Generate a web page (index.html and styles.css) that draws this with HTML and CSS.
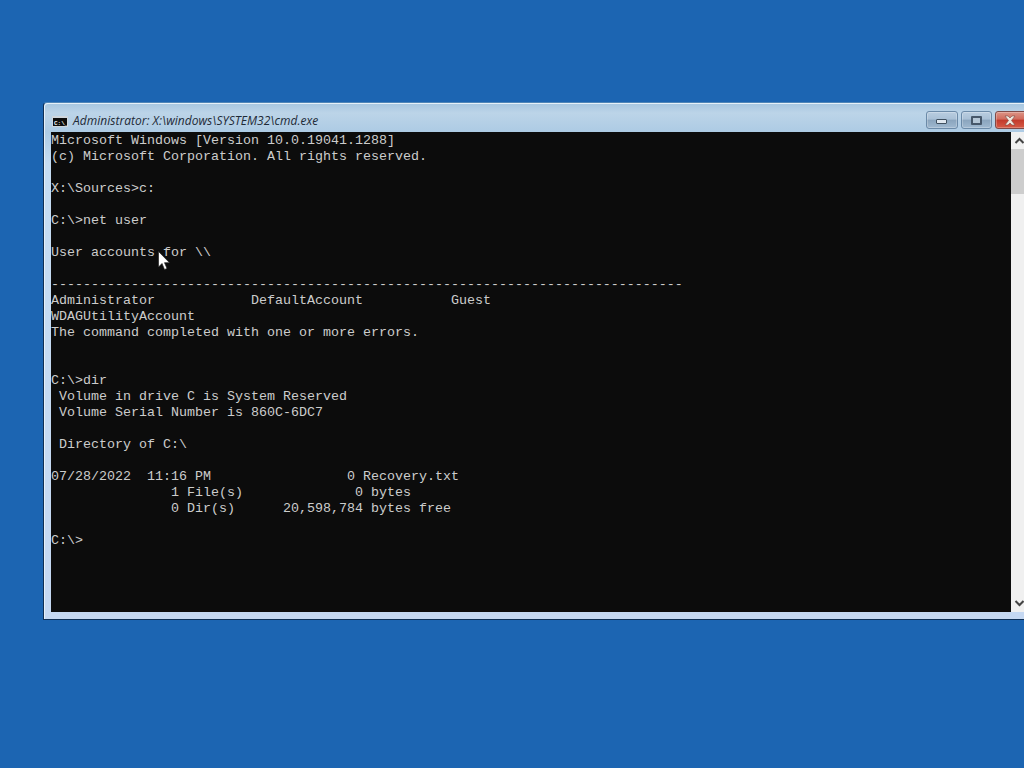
FILE: index.html
```html
<!DOCTYPE html>
<html lang="en">
<head>
<meta charset="utf-8">
<title>cmd.exe</title>
<link rel="stylesheet" href="styles.css">
</head>
<body>
<main class="desktop">
  <section class="window">
    <header class="titlebar">
      <svg class="app-icon" width="16" height="11" viewBox="0 0 16 11" aria-hidden="true">
        <rect width="16" height="11" fill="#cfd6dc"/>
        <rect x="1" y="2" width="14" height="8" fill="#0d0d0d"/>
        <text class="icon-text" x="2" y="8.500">C:\_</text>
      </svg>
      <span class="title">Administrator: X:\windows\SYSTEM32\cmd.exe</span>
      <div class="controls">
        <div class="btn btn-min"><span class="glyph-min"></span></div>
        <div class="btn btn-max"><span class="glyph-max"></span></div>
        <div class="btn btn-close">
          <svg width="12" height="11" viewBox="0 0 12 11" aria-hidden="true">
            <path d="M1 1h3l2 2 2-2h3L7.500 5.500 11 10H8L6 8 4 10H1l3.500-4.500z" fill="#f0e8e0" stroke="#7a4a44" stroke-width=".6"/>
          </svg>
        </div>
      </div>
    </header>
    <div class="client">
<pre class="console">Microsoft Windows [Version 10.0.19041.1288]
(c) Microsoft Corporation. All rights reserved.

X:\Sources&gt;c:

C:\&gt;net user

User accounts for \\

-------------------------------------------------------------------------------
Administrator            DefaultAccount           Guest
WDAGUtilityAccount
The command completed with one or more errors.


C:\&gt;dir
 Volume in drive C is System Reserved
 Volume Serial Number is 860C-6DC7

 Directory of C:\

07/28/2022  11:16 PM                 0 Recovery.txt
               1 File(s)              0 bytes
               0 Dir(s)      20,598,784 bytes free

C:\&gt;</pre>
      <aside class="scrollbar">
        <svg class="arrow" width="17" height="17" viewBox="0 0 17 17" aria-hidden="true"><path d="M4.500 11 8.500 7l4 4" fill="none" stroke="#444" stroke-width="2"/></svg>
        <div class="track"><div class="thumb"></div></div>
        <svg class="arrow" width="17" height="17" viewBox="0 0 17 17" aria-hidden="true"><path d="M4.500 6l4 4 4-4" fill="none" stroke="#444" stroke-width="2"/></svg>
      </aside>
    </div>
  </section>
  <svg class="cursor" width="12" height="20" viewBox="0 0 12 20" aria-hidden="true">
    <path d="M.5.500v15.500l3.500-3.500 2.500 6 2.500-1-2.500-5.800h5z" fill="#fff" stroke="#222" stroke-width=".7"/>
  </svg>
</main>
</body>
</html>
```
FILE: styles.css
```css
* { box-sizing: border-box; }
html, body { margin: 0; height: 100%; overflow: hidden; }
.desktop {
  position: relative;
  width: 1024px;
  height: 768px;
  overflow: hidden;
  background: #1c65b2;
}
.window {
  position: absolute;
  left: 43px;
  top: 102px;
  width: 992px;
  height: 518px;
  display: flex;
  flex-direction: column;
  padding: 0 7px 7px 7px;
  border: 1px solid #0f2f55;
  border-top-color: #4f86b8;
  border-radius: 4px 4px 0 0;
  background: linear-gradient(to bottom, #a6c6e0 0, #bcd4e8 10px, #adcbe4 29px, #c5dcf2 60px, #c5d8f2 100%);
  box-shadow: inset 1px 1px 0 #e6f0f8;
}
.titlebar {
  flex: none;
  height: 29px;
  margin-left: -1px;
  display: flex;
  align-items: center;
  gap: 5px;
}
.app-icon { flex: none; margin-left: 2px; margin-top: 7px; }
.icon-text {
  font: bold 6px "Liberation Mono", monospace;
  fill: #f4f4f4;
}
.title {
  font: italic 12px/16px "Open Sans", "Liberation Sans", sans-serif;
  letter-spacing: .02px;
  color: #1e2a36;
  margin-top: 7px;
  white-space: nowrap;
}
.controls {
  margin-left: auto;
  display: flex;
  gap: 3px;
  margin-top: 5px;
  margin-right: -14px;
}
.btn {
  width: 31px;
  height: 18px;
  border: 1px solid #6b8aa8;
  border-radius: 3px;
  display: flex;
  align-items: center;
  justify-content: center;
  background: linear-gradient(to bottom, #b9cde0 0, #a9c0d6 45%, #8aa4bd 50%, #9fb8d0 100%);
  box-shadow: inset 0 0 0 1px rgba(255, 255, 255, .25);
}
.btn-min { width: 32px; }
.btn-close {
  width: 46px;
  justify-content: flex-start;
  padding-left: 8px;
  border-color: #7f4a48;
  background: linear-gradient(to bottom, #dc9486 0, #d06a5c 45%, #c23a2c 50%, #d65a46 100%);
}
.glyph-min {
  width: 11px;
  height: 5px;
  margin-top: 3px;
  margin-left: -1px;
  background: #dfe7ef;
  border: 1px solid #3f5060;
  border-radius: 1px;
}
.glyph-max {
  width: 11px;
  height: 9px;
  margin-left: -1px;
  background: #b4c6d6;
  border: 2px solid #46576a;
  border-radius: 1px;
}
.client {
  flex: 1;
  min-height: 0;
  display: flex;
}
.console {
  flex: none;
  width: 960px;
  height: 480px;
  margin: 0;
  padding-top: 1px;
  overflow: hidden;
  background: #0c0c0c;
  color: #cccccc;
  font: 13.333px/16px "Liberation Mono", monospace;
}
.scrollbar {
  flex: none;
  width: 17px;
  display: flex;
  flex-direction: column;
  background: #f0f0f0;
}
.arrow { flex: none; display: block; }
.track { flex: 1; background: #f0f0f0; }
.thumb { height: 45px; background: #cdcdcd; }
.cursor { position: absolute; left: 158px; top: 251px; }
```
